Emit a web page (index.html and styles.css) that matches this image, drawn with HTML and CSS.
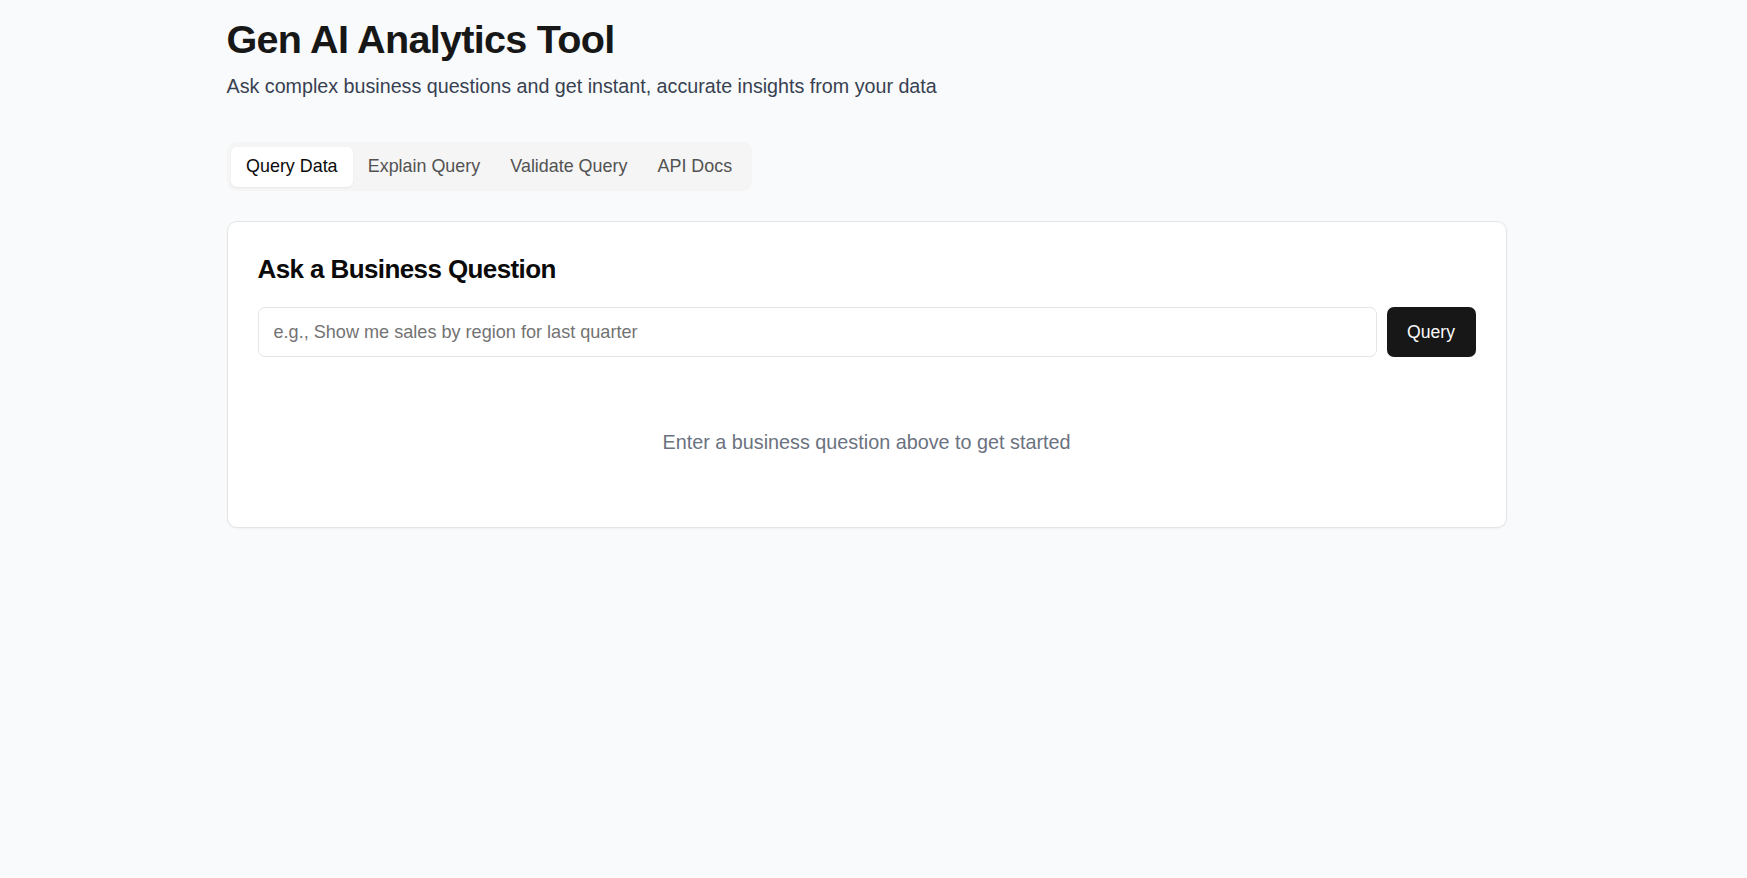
FILE: index.html
```html
<!DOCTYPE html>
<html lang="en">
<head>
<meta charset="utf-8">
<title>Gen AI Analytics Tool</title>
<link rel="stylesheet" href="styles.css">
</head>
<body>
<div class="app">
  <main class="container">
    <header class="header">
      <h1 class="title">Gen AI Analytics Tool</h1>
      <p class="subtitle">Ask complex business questions and get instant, accurate insights from your data</p>
    </header>

    <nav class="tabs" role="tablist">
      <button class="tab tab-active" role="tab">Query Data</button>
      <button class="tab" role="tab">Explain Query</button>
      <button class="tab" role="tab">Validate Query</button>
      <button class="tab" role="tab">API Docs</button>
    </nav>

    <section class="card">
      <h2 class="card-title">Ask a Business Question</h2>
      <div class="query-row">
        <input class="query-input" type="text" placeholder="e.g., Show me sales by region for last quarter">
        <button class="query-btn">Query</button>
      </div>
      <div class="empty">
        <p class="empty-text">Enter a business question above to get started</p>
      </div>
    </section>
  </main>
</div>
</body>
</html>
```

FILE: styles.css
```css
* {
  box-sizing: border-box;
}

html, body {
  margin: 0;
  padding: 0;
}

body {
  background: #f9fafb;
  font-family: "Liberation Sans", Arial, Helvetica, sans-serif;
  color: #171717;
  min-height: 100vh;
}

.app {
  padding: 17px 14px 40px 0;
}

.container {
  max-width: 1280px;
  margin: 0 auto;
}

.header {
  display: flex;
  flex-direction: column;
}

.title {
  margin: 0;
  font-size: 39.6px;
  line-height: 44px;
  font-weight: 700;
  letter-spacing: -0.72px;
  color: #171717;
}

.subtitle {
  margin: 10px 0 0;
  font-size: 19.7px;
  line-height: 31px;
  color: #374151;
}

.tabs {
  display: inline-flex;
  align-items: center;
  margin-top: 40px;
  padding: 4.5px;
  height: 49px;
  background: #f5f5f5;
  border-radius: 9px;
}

.tab {
  height: 40px;
  padding: 0 15.1px;
  border: none;
  background: transparent;
  font-family: inherit;
  font-size: 17.9px;
  color: #525252;
  border-radius: 6px;
  cursor: pointer;
}

.tab-active {
  background: #ffffff;
  color: #0a0a0a;
  box-shadow: 0 1px 2px rgba(0, 0, 0, 0.06);
}

.card {
  margin-top: 30px;
  background: #ffffff;
  border: 1px solid #e5e5e5;
  border-radius: 10px;
  padding: 31px 30px 30px;
  box-shadow: 0 1px 2px rgba(0, 0, 0, 0.04);
}

.card-title {
  margin: 0;
  font-size: 26px;
  line-height: 32px;
  font-weight: 700;
  letter-spacing: -0.6px;
  color: #0a0a0a;
}

.query-row {
  display: flex;
  gap: 10px;
  margin-top: 22px;
}

.query-input {
  flex: 1;
  height: 50px;
  padding: 0 15px;
  border: 1px solid #e5e5e5;
  border-radius: 7px;
  font-family: inherit;
  font-size: 18.1px;
  color: #171717;
  background: #ffffff;
  outline: none;
}

.query-input::placeholder {
  color: #737373;
}

.query-btn {
  width: 89px;
  height: 50px;
  border: none;
  border-radius: 7px;
  background: #171717;
  color: #fafafa;
  font-family: inherit;
  font-size: 17.6px;
  cursor: pointer;
}

.empty {
  padding: 70px 0 39px;
  text-align: center;
}

.empty-text {
  margin: 0;
  font-size: 19.8px;
  line-height: 31px;
  color: #6b7280;
}
```
